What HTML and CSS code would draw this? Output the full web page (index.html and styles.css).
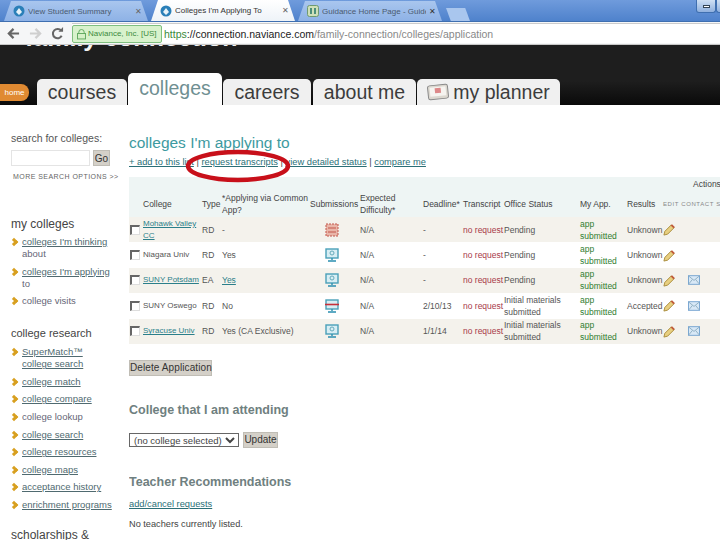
FILE: index.html
```html
<!DOCTYPE html>
<html>
<head>
<meta charset="utf-8">
<title>Colleges I'm Applying To</title>
<link rel="stylesheet" href="styles.css">
</head>
<body>
<div class="page">
  <div class="tabstrip">
    <div class="tab tab-bg"><svg class="fav" viewBox="0 0 12 12"><circle cx="6" cy="6" r="5.5" fill="#2a7fb8"/><path d="M3 7 6 3l3 4-3 3z" fill="#e8f2f8"/></svg><span class="tab-title">View Student Summary</span><span class="tab-x">✕</span></div>
    <div class="tab tab-on"><svg class="fav" viewBox="0 0 12 12"><circle cx="6" cy="6" r="5.5" fill="#2a7fb8"/><path d="M3 7 6 3l3 4-3 3z" fill="#e8f2f8"/></svg><span class="tab-title">Colleges I'm Applying To</span><span class="tab-x">✕</span></div>
    <div class="tab tab-bg"><svg class="fav" viewBox="0 0 12 12"><rect x=".5" y=".5" width="11" height="11" rx="2" fill="#cfe0b8" stroke="#6f9a70"/><path d="M4 3v6M8 3v6" stroke="#2c7a6a" stroke-width="1.6"/></svg><span class="tab-title">Guidance Home Page - Guide</span><span class="tab-x dark">✕</span></div>
    <div class="tab-new"></div>
    <div class="winbtns"><span class="winbtn"><i></i></span><span class="winbtn winbtn-cut"></span></div>
  </div>
  <div class="toolbar">
    <svg class="nav" viewBox="0 0 14 14"><path d="M13 7H3M7 2 2 7l5 5" fill="none" stroke="#666" stroke-width="2.4"/></svg>
    <svg class="nav" viewBox="0 0 14 14"><path d="M1 7h10M7 2l5 5-5 5" fill="none" stroke="#cfcfcf" stroke-width="2.4"/></svg>
    <svg class="nav" viewBox="0 0 14 14"><path d="M11.5 9.5A5 5 0 1 1 11 4" fill="none" stroke="#666" stroke-width="2.2"/><path d="M8 5h5V0z" fill="#666"/></svg>
    <div class="omni">
      <div class="ev"><svg class="lock" viewBox="0 0 10 12"><path d="M2 6V4a3 3 0 0 1 6 0v2" fill="none" stroke="#5aa55a"/><rect x=".5" y="5.5" width="9" height="6" fill="#d6f0c8" stroke="#5aa55a"/></svg>Naviance, Inc. [US]</div>
      <div class="url"><span class="https">https</span><span class="u1">://connection.naviance.com</span>/family-connection/colleges/application</div>
    </div>
  </div>
  <div class="hdr">
    <div class="brand">family connection</div>
    <nav class="nav-row">
      <a class="home">home</a>
      <a class="mt mt-courses">courses</a>
      <a class="mt mt-colleges">colleges</a>
      <a class="mt mt-careers">careers</a>
      <a class="mt mt-about">about me</a>
      <a class="mt mt-planner"><svg class="cal" viewBox="0 0 22 20"><g transform="rotate(-6 11 10)"><rect x="1" y="3" width="20" height="14" rx="2" fill="#dcd8d0" stroke="#888"/><rect x="3" y="5" width="16" height="9" fill="#f6f4f0"/><rect x="8" y="6" width="6" height="5" fill="#d88"/></g></svg>my planner</a>
    </nav>
  </div>
  <div class="content">
    <aside class="side">
      <div class="s-label">search for colleges:</div>
      <div class="s-form"><input class="s-input" type="text"><button class="btn s-go">Go</button></div>
      <div class="s-more">MORE SEARCH OPTIONS &gt;&gt;</div>
      <h4 class="s-h s-h1">my colleges</h4>
      <ul class="s-list">
        <li><a>colleges I'm thinking</a> about</li>
        <li><a>colleges I'm applying</a> to</li>
        <li>college visits</li>
      </ul>
      <h4 class="s-h s-h2">college research</h4>
      <ul class="s-list">
        <li><a>SuperMatch™<br>college search</a></li>
        <li><a>college match</a></li>
        <li><a>college compare</a></li>
        <li>college lookup</li>
        <li><a>college search</a></li>
        <li><a>college resources</a></li>
        <li><a>college maps</a></li>
        <li><a>acceptance history</a></li>
        <li><a>enrichment programs</a></li>
      </ul>
      <h4 class="s-h s-h3">scholarships &amp;</h4>
    </aside>
    <main class="main">
      <h1 class="title">colleges I'm applying to</h1>
      <div class="links"><a>+ add to this list</a> | <a>request transcripts</a> | <a>view detailed status</a> | <a>compare me</a></div>
      <table class="grid">
        <colgroup><col class="c1"><col class="c2"><col class="c3"><col class="c4"><col class="c5"><col class="c6"><col class="c7"><col class="c8"><col class="c9"><col class="c10"><col class="c11"><col class="c12"><col class="c13"></colgroup>
        <thead>
          <tr class="act"><th colspan="13">Actions</th></tr>
          <tr class="hd">
            <th></th><th>College</th><th>Type</th><th>*Applying via Common<br>App?</th><th>Submissions</th><th>Expected<br>Difficulty*</th><th>Deadline*</th><th>Transcript</th><th>Office Status</th><th>My App.</th><th>Results</th><th class="caps" colspan="2">EDIT CONTACT SR</th>
          </tr>
        </thead>
        <tbody>
          <tr class="odd"><td><span class="chk"></span></td><td class="nm"><a>Mohawk Valley<br>CC</a></td><td>RD</td><td>-</td><td class="ic"><svg class="sub" viewBox="0 0 14 14"><rect x="1" y="1" width="12" height="12" fill="#e9b5a8" stroke="#c2574a" stroke-dasharray="2 1"/><path d="M3 5h8M3 9h8" stroke="#c2574a"/></svg></td><td>N/A</td><td>-</td><td class="red">no request</td><td>Pending</td><td class="grn">app submitted</td><td>Unknown</td><td class="ic"><svg class="pen" viewBox="0 0 14 14"><path d="M1 13l1-4 7-7 3 3-7 7z" fill="#e8cf80" stroke="#a88a3a"/><path d="M9 2l3 3" stroke="#c05a3a" stroke-width="2"/></svg></td><td></td></tr>
          <tr><td><span class="chk"></span></td><td class="nm">Niagara Univ</td><td>RD</td><td>Yes</td><td class="ic"><svg class="sub" viewBox="0 0 14 14"><rect x="1" y="1" width="12" height="9" fill="#d8eef4" stroke="#4aa0b8" stroke-width="1.4"/><path d="M7 10v2M3 13h8" stroke="#2a8fb0" stroke-width="1.4"/><circle cx="7" cy="5" r="2" fill="none" stroke="#6ab"/></svg></td><td>N/A</td><td>-</td><td class="red">no request</td><td>Pending</td><td class="grn">app submitted</td><td>Unknown</td><td class="ic"><svg class="pen" viewBox="0 0 14 14"><path d="M1 13l1-4 7-7 3 3-7 7z" fill="#e8cf80" stroke="#a88a3a"/><path d="M9 2l3 3" stroke="#c05a3a" stroke-width="2"/></svg></td><td></td></tr>
          <tr class="odd"><td><span class="chk"></span></td><td class="nm"><a>SUNY Potsdam</a></td><td>EA</td><td><a>Yes</a></td><td class="ic"><svg class="sub" viewBox="0 0 14 14"><rect x="1" y="1" width="12" height="9" fill="#d8eef4" stroke="#4aa0b8" stroke-width="1.4"/><path d="M7 10v2M3 13h8" stroke="#2a8fb0" stroke-width="1.4"/><circle cx="7" cy="5" r="2" fill="none" stroke="#6ab"/></svg></td><td>N/A</td><td>-</td><td class="red">no request</td><td>Pending</td><td class="grn">app submitted</td><td>Unknown</td><td class="ic"><svg class="pen" viewBox="0 0 14 14"><path d="M1 13l1-4 7-7 3 3-7 7z" fill="#e8cf80" stroke="#a88a3a"/><path d="M9 2l3 3" stroke="#c05a3a" stroke-width="2"/></svg></td><td class="ic"><svg class="mail" viewBox="0 0 14 11"><rect x=".5" y=".5" width="13" height="10" fill="#d8e8f6" stroke="#6a9ccc"/><path d="M1 1l6 5 6-5M1 10l4-5M13 10 9 5" fill="none" stroke="#8ab"/></svg></td></tr>
          <tr><td><span class="chk"></span></td><td class="nm">SUNY Oswego</td><td>RD</td><td>No</td><td class="ic"><svg class="sub" viewBox="0 0 14 14"><rect x="1" y="1" width="12" height="9" fill="#d8eef4" stroke="#4aa0b8" stroke-width="1.4"/><path d="M7 10v2M3 13h8" stroke="#2a8fb0" stroke-width="1.4"/><path d="M0 5.5h14" stroke="#c8303a" stroke-width="1.6"/></svg></td><td>N/A</td><td>2/10/13</td><td class="red">no request</td><td>Initial materials submitted</td><td class="grn">app submitted</td><td>Accepted</td><td class="ic"><svg class="pen" viewBox="0 0 14 14"><path d="M1 13l1-4 7-7 3 3-7 7z" fill="#e8cf80" stroke="#a88a3a"/><path d="M9 2l3 3" stroke="#c05a3a" stroke-width="2"/></svg></td><td class="ic"><svg class="mail" viewBox="0 0 14 11"><rect x=".5" y=".5" width="13" height="10" fill="#d8e8f6" stroke="#6a9ccc"/><path d="M1 1l6 5 6-5M1 10l4-5M13 10 9 5" fill="none" stroke="#8ab"/></svg></td></tr>
          <tr class="odd"><td><span class="chk"></span></td><td class="nm"><a>Syracuse Univ</a></td><td>RD</td><td>Yes (CA Exclusive)</td><td class="ic"><svg class="sub" viewBox="0 0 14 14"><rect x="1" y="1" width="12" height="9" fill="#d8eef4" stroke="#4aa0b8" stroke-width="1.4"/><path d="M7 10v2M3 13h8" stroke="#2a8fb0" stroke-width="1.4"/><circle cx="7" cy="5" r="2" fill="none" stroke="#6ab"/></svg></td><td>N/A</td><td>1/1/14</td><td class="red">no request</td><td>Initial materials submitted</td><td class="grn">app submitted</td><td>Unknown</td><td class="ic"><svg class="pen" viewBox="0 0 14 14"><path d="M1 13l1-4 7-7 3 3-7 7z" fill="#e8cf80" stroke="#a88a3a"/><path d="M9 2l3 3" stroke="#c05a3a" stroke-width="2"/></svg></td><td class="ic"><svg class="mail" viewBox="0 0 14 11"><rect x=".5" y=".5" width="13" height="10" fill="#d8e8f6" stroke="#6a9ccc"/><path d="M1 1l6 5 6-5M1 10l4-5M13 10 9 5" fill="none" stroke="#8ab"/></svg></td></tr>
        </tbody>
      </table>
      <button class="btn del">Delete Application</button>
      <h2 class="h2 h2a">College that I am attending</h2>
      <div class="att"><select class="sel"><option>(no college selected)</option></select><button class="btn upd">Update</button></div>
      <h2 class="h2 h2b">Teacher Recommendations</h2>
      <div class="addc"><a>add/cancel requests</a></div>
      <div class="none">No teachers currently listed.</div>
    </main>
    <svg class="ring" viewBox="0 0 110 36"><ellipse cx="55" cy="18" rx="50" ry="14" fill="none" stroke="#c8101a" stroke-width="4.5"/></svg>
  </div>
</div>
</body>
</html>
```
FILE: styles.css
```css
* { box-sizing: border-box; }
html, body { margin: 0; padding: 0; background: #fff; }
.page { width: 720px; height: 540px; overflow: hidden; font-family: "Liberation Sans", Arial, sans-serif; font-size: 9px; color: #444; }

.tabstrip { height: 22px; display: flex; align-items: flex-end; gap: 3px; padding-left: 4px; background: linear-gradient(#6f9bdc, #4f82cc); border-bottom: 1px solid #3f6fb0; }
.tab { width: 144px; height: 20px; display: flex; align-items: center; gap: 3px; padding: 0 6px 0 9px; font-size: 8px; clip-path: polygon(0 100%, 7px 0, calc(100% - 7px) 0, 100% 100%); }
.tab-bg { background: linear-gradient(#a9c6ee, #8eb2e6); color: #4a5a70; }
.tab-on { background: linear-gradient(#fff, #eef3f8); color: #333; height: 21px; }
.fav { width: 12px; height: 12px; flex: none; }
.tab-title { flex: 1; white-space: nowrap; overflow: hidden; }
.tab-x { font-size: 8px; color: #666; }
.tab-x.dark { color: #333; }
.tab-new { width: 24px; height: 13px; margin-left: 1px; background: #a9c6ee; clip-path: polygon(0 0, 80% 0, 100% 100%, 20% 100%); }
.winbtns { margin-left: auto; display: flex; gap: 0; align-self: flex-start; }
.winbtn { width: 20px; height: 13px; background: linear-gradient(#cfe0f4, #8fb0de); border: 1px solid #3f6fb0; border-top: 0; border-radius: 0 0 3px 3px; display: flex; align-items: center; justify-content: center; }
.winbtn-cut { width: 4px; border-right: 0; border-radius: 0 0 0 3px; }
.winbtn i { width: 7px; height: 3px; background: #fff; border: 1px solid #345; }

.toolbar { height: 23px; display: flex; align-items: center; gap: 9px; padding-left: 7px; background: #f5f6f7; border-bottom: 1px solid #c8c8c8; }
.nav { width: 13px; height: 13px; flex: none; }
.omni { flex: 1; height: 20px; margin-left: -1px; display: flex; align-items: center; background: #fff; border-top: 1px solid #ccc; font-size: 10.5px; color: #888; white-space: nowrap; }
.ev { height: 18px; width: 90px; flex: none; display: flex; align-items: center; gap: 2px; padding-left: 4px; background: #d8f2cc; border: 1px solid #7fbf7f; border-radius: 2px; color: #3c8a3c; font-size: 8px; white-space: nowrap; overflow: hidden; }
.lock { width: 9px; height: 12px; flex: none; }
.url { padding-left: 2px; }
.https { color: #3a8a3a; }
.u1 { color: #222; }

.hdr { height: 60px; background: linear-gradient(#1e1e1e 60%, #0a0a0a); overflow: hidden; display: flex; flex-direction: column; }
.brand { margin: -23px 0 0 25px; height: 32px; font-size: 25px; font-weight: bold; line-height: 30px; color: #f2f2f2; white-space: nowrap; }
.nav-row { margin-top: 18px; display: flex; align-items: flex-end; height: 33px; }
.home { align-self: center; width: 29px; height: 17px; margin: 8px 8px 0 0; background: #e08a32; border-radius: 0 8px 8px 0; color: #fff; font-size: 8px; line-height: 17px; text-align: center; }
.mt { height: 26px; display: flex; align-items: center; justify-content: center; background: #f0f0f0; color: #3c3c3c; font-size: 19.5px; border-radius: 5px 5px 0 0; margin-right: 1px; }
.mt-courses { width: 90px; }
.mt-colleges { width: 94px; height: 32px; background: #fff; color: #6f8f92; align-items: flex-start; padding-top: 4px; }
.mt-careers { width: 88px; }
.mt-about { width: 103px; margin-left: 1px; }
.mt-planner { width: 143px; gap: 4px; }
.cal { width: 22px; height: 20px; }

.content { position: relative; display: flex; align-items: flex-start; height: 435px; }
.side { width: 129px; flex: none; padding: 27px 0 0 11px; color: #555; }
.s-label { font-size: 10.5px; line-height: 12px; white-space: nowrap; }
.s-form { display: flex; align-items: flex-start; gap: 3px; margin-top: 6px; }
.s-input { width: 79px; height: 16px; border: 1px solid #e4e4e4; padding: 0; background: #fff; }
.btn { font-family: "Liberation Sans", Arial, sans-serif; color: #333; background: #d4d0c8; border: 1px solid #c0bdb5; padding: 0; }
.s-go { width: 17px; height: 16px; font-size: 10px; }
.s-more { margin: 6px 0 0 2px; font-size: 7px; letter-spacing: .45px; line-height: 9px; color: #666; white-space: nowrap; }
.s-h { margin: 0; font-weight: normal; font-size: 12px; line-height: 14px; color: #444; }
.s-h1 { margin-top: 36px; }
.s-h2 { margin-top: 15.4px; font-size: 11px; }
.s-h3 { margin-top: 13.4px; }
.s-list { list-style: none; margin: 0; padding: 0; width: 106px; }
.s-list li { position: relative; padding: 0 0 3.6px 11px; font-size: 9.5px; line-height: 12px; color: #667; margin-top: 2px; }
.s-list li::before { content: ""; position: absolute; left: 0; top: 3px; width: 3px; height: 3px; border-top: 3px solid #d8a020; border-right: 3px solid #d8a020; transform: rotate(45deg); }
.s-list a { color: #4f6a70; text-decoration: underline; }
.s-h1 + .s-list { margin-top: 5px; }
.s-h2 + .s-list { margin-top: 6px; }

.main { flex: 1; min-width: 0; overflow: hidden; padding-top: 29px; }
.title { margin: 0; font-size: 15.5px; font-weight: normal; line-height: 18px; color: #3d9aa0; white-space: nowrap; }
.links { margin-top: 5px; font-size: 9.3px; line-height: 11px; white-space: nowrap; color: #444; }
.links a { color: #2b6f77; text-decoration: underline; }

.grid { table-layout: fixed; width: 639px; margin-top: 9px; border-collapse: collapse; font-size: 8.5px; line-height: 12px; color: #555; }
.grid a { color: #2b7f8a; text-decoration: underline; }
.grid th { font-weight: normal; text-align: left; padding: 0 2px; color: #444; background: #eef5f4; }
.act th { height: 14px; text-align: left; padding-left: 564px; }
.hd th { height: 26px; vertical-align: middle; white-space: nowrap; }
.hd th.caps { font-size: 6px; letter-spacing: .6px; color: #888; white-space: nowrap; }
.grid td { height: 25.4px; padding: 0 2px; vertical-align: middle; }
.grid td.nm { white-space: nowrap; font-size: 8px; }
.odd td { background: #f4f2ec; }
.c1 { width: 12px; } .c2 { width: 59px; } .c3 { width: 20px; } .c4 { width: 88px; } .c5 { width: 50px; } .c6 { width: 63px; } .c7 { width: 40px; } .c8 { width: 41px; } .c9 { width: 76px; } .c10 { width: 47px; } .c11 { width: 36px; } .c12 { width: 24px; } .c13 { width: 83px; }
.chk { display: block; width: 10px; height: 10px; margin-left: -1px; border: 1px solid #777; border-width: 2px 1px 1px 2px; border-color: #666 #ddd #ddd #666; background: #fff; }
.ic { text-align: left; }
.sub { display: block; width: 14px; height: 14px; margin-left: 15px; }
.pen { display: block; width: 13px; height: 13px; }
.mail { display: block; width: 12px; height: 10px; margin-left: 1px; }
.red { color: #a83a4a; white-space: nowrap; }
.grn { color: #2f7d2f; }

.del { display: block; width: 83px; height: 16px; margin-top: 16px; font-size: 10px; letter-spacing: .1px; white-space: nowrap; }
.h2 { margin: 0; font-size: 12.5px; line-height: 14px; font-weight: bold; color: #6f8080; white-space: nowrap; }
.h2a { margin-top: 27px; }
.att { display: flex; align-items: center; gap: 4px; margin-top: 15px; }
.sel { width: 110px; height: 14px; font-family: "Liberation Sans", Arial, sans-serif; font-size: 9.5px; padding: 0; border: 1px solid #666; background: #fff; color: #444; }
.upd { width: 35px; height: 16px; font-size: 10px; }
.h2b { margin-top: 27px; }
.addc { margin-top: 10px; font-size: 9.3px; line-height: 11px; }
.addc a { color: #2b6f77; text-decoration: underline; }
.none { margin-top: 9px; font-size: 9.2px; line-height: 11px; color: #444; }

.ring { position: absolute; left: 183px; top: 43px; width: 110px; height: 36px; }
```
